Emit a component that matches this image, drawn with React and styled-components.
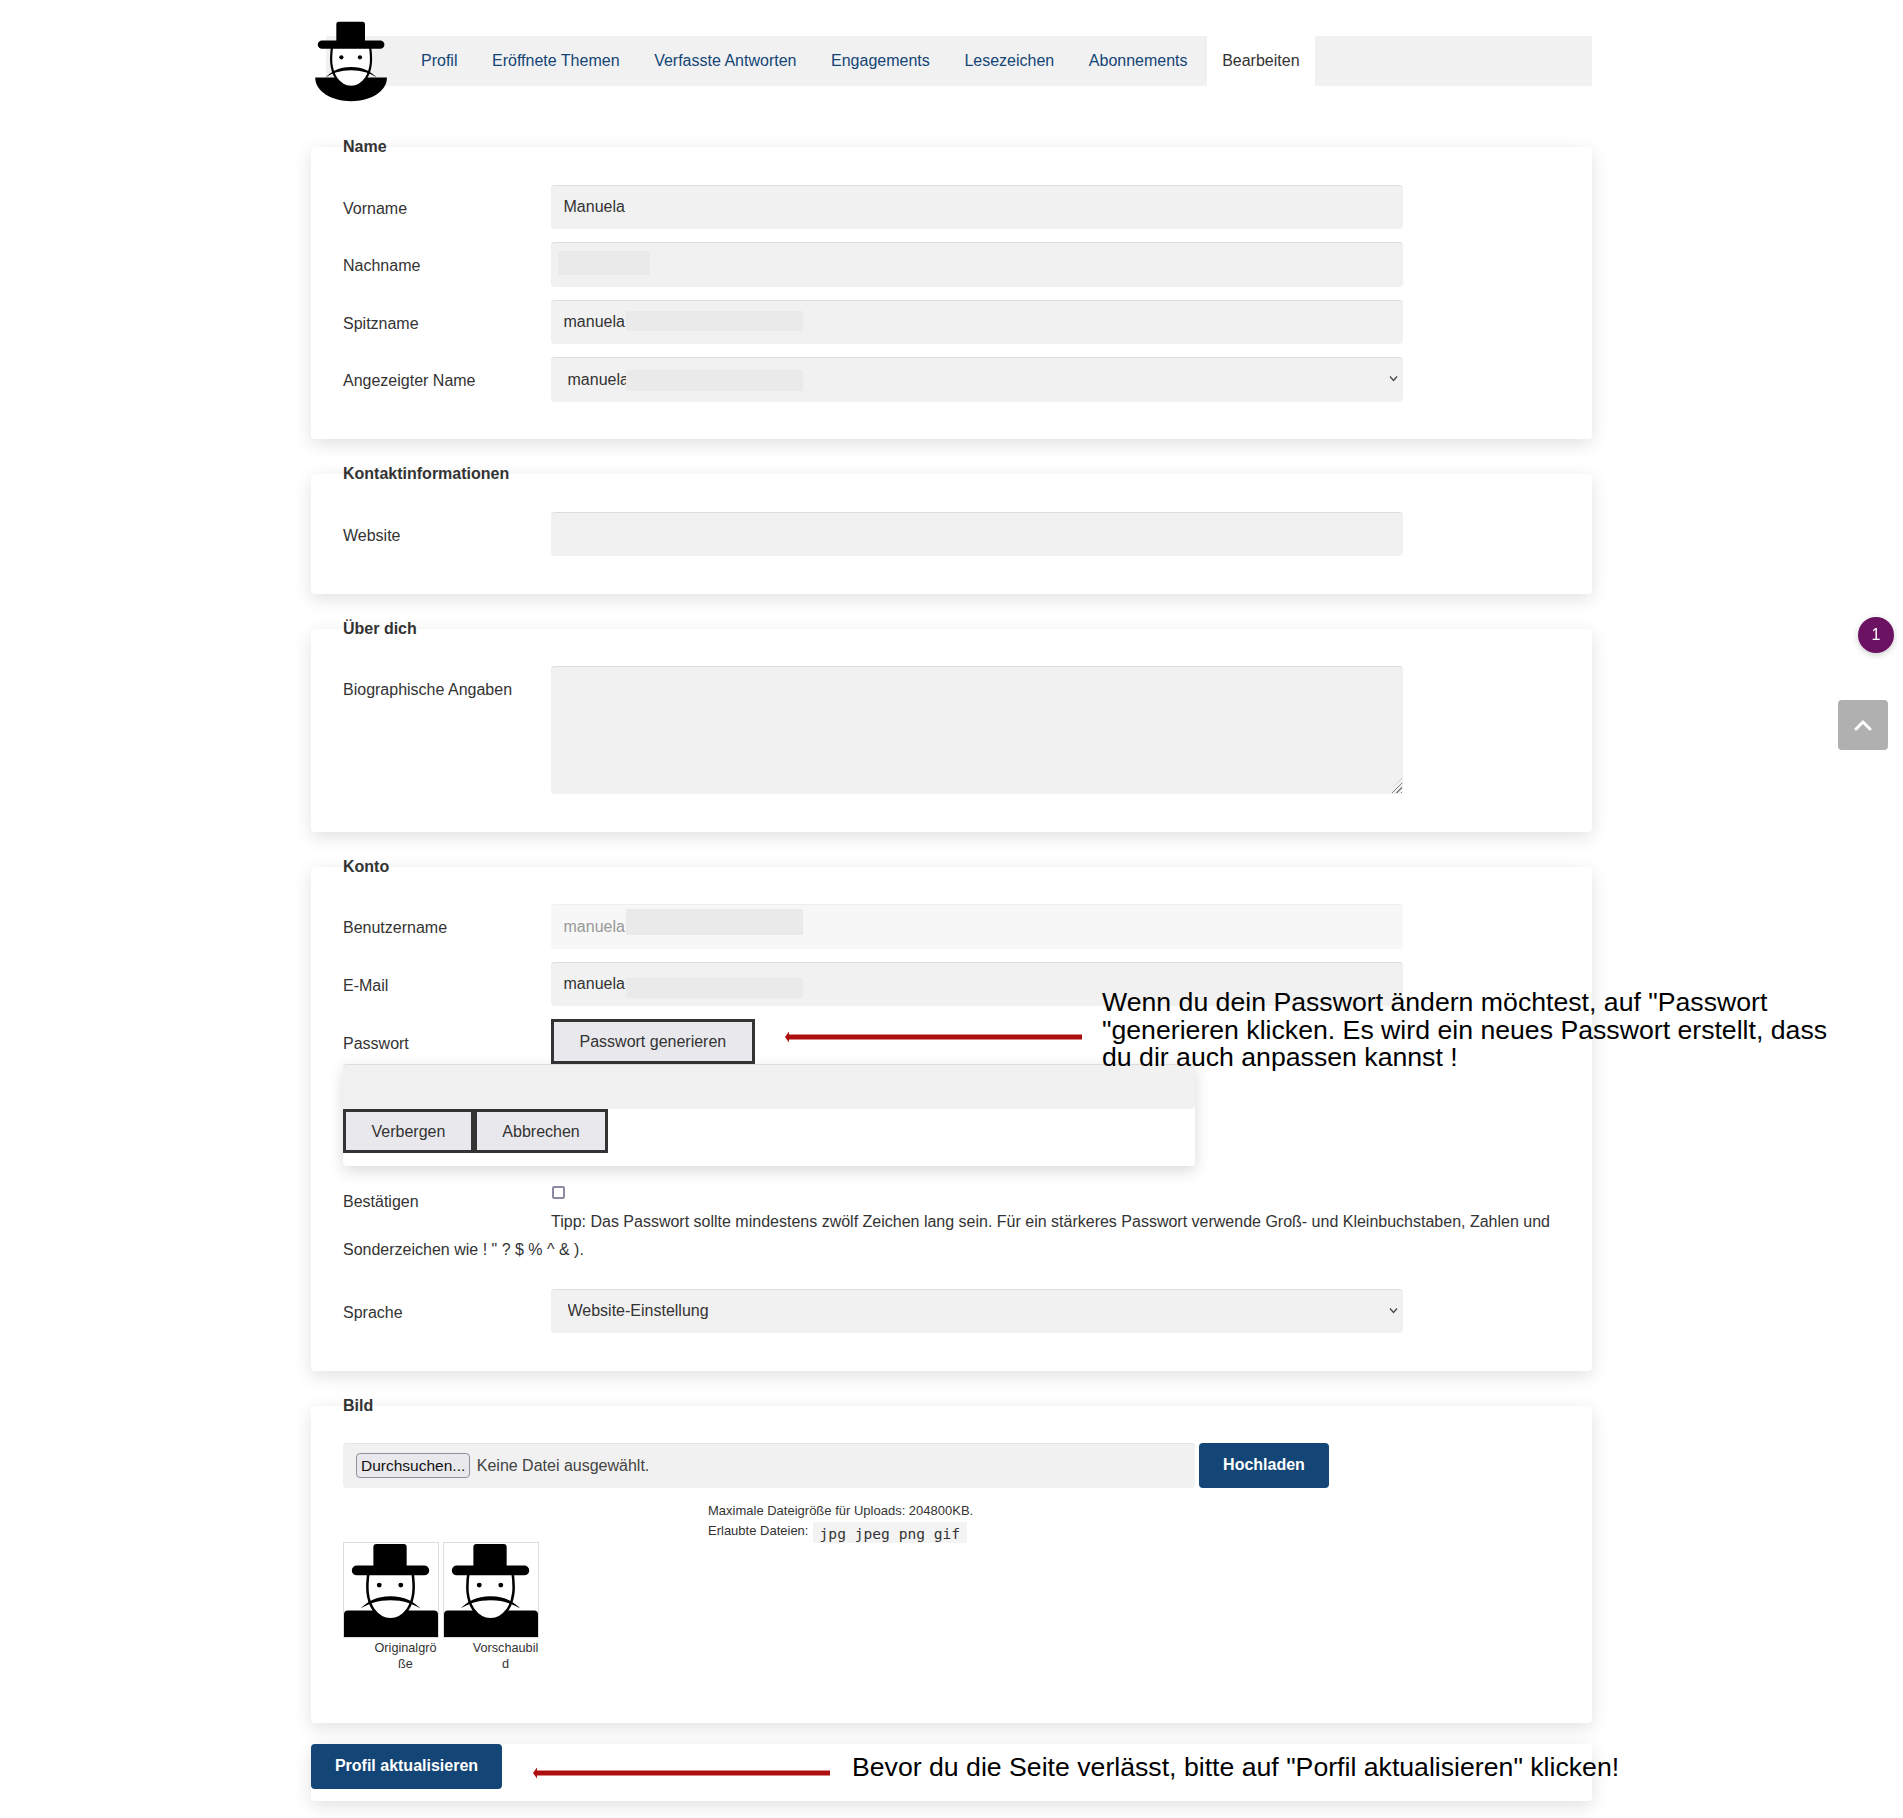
import styled, { createGlobalStyle } from 'styled-components'

const GlobalStyle = createGlobalStyle`
  body {
    margin: 0;
    background: #fff;
    color: #333;
    font-family: 'Liberation Sans', Arial, sans-serif;
    font-size: 16px;
  }
`

const Page = styled.div`
  position: relative;
  width: 1281px;
  height: 1818px;
  margin: 0 auto;
  padding-top: 36px;
  box-sizing: border-box;
`

const Header = styled.header`
  position: relative;
  height: 50px;
  margin-bottom: 61px;
  padding-left: 15px;
`

const LogoMark = styled.svg`
  position: absolute;
  left: 0;
  top: -15px;
  width: 81px;
  height: 81px;
`

const Nav = styled.nav`
  display: flex;
  gap: 4.6px;
  height: 50px;
  padding-left: 80px;
  background: #f1f1f1;
`

const Tab = styled.a`
  padding: 0 15px;
  line-height: 49px;
  color: ${(p) => (p.$active ? '#333' : '#134576')};
  background: ${(p) => (p.$active ? '#fff' : 'transparent')};
  text-decoration: none;
`

const Card = styled.section`
  margin-bottom: ${(p) => (p.$last ? '21px' : '35px')};
  padding: 0 32px 37.5px;
  background: #fff;
  border-radius: 4px;
  box-shadow: 0 5px 18px rgba(0, 0, 0, 0.12);
`

const CardTitle = styled.h3`
  position: relative;
  top: -10px;
  height: 20px;
  margin: 0 0 -11.5px;
  padding-bottom: 29px;
  font-size: 16px;
  line-height: 20px;
  font-weight: 700;
`

const Rows = styled.div`
  display: flex;
  flex-direction: column;
  gap: 13px;
`

const Row = styled.div`
  display: flex;
  align-items: ${(p) => (p.$top ? 'flex-start' : 'center')};
`

const Label = styled.label`
  width: 208px;
  flex: none;
  padding-top: ${(p) => (p.$top ? '14px' : '4px')};
  line-height: 20px;
`

const FieldWrap = styled.div`
  position: relative;
  width: 852px;
`

const Input = styled.input`
  display: block;
  width: 100%;
  height: 44.5px;
  box-sizing: border-box;
  padding: 0 12.5px;
  border: 0;
  border-top: 1px solid ${(p) => (p.disabled ? '#eee' : '#ddd')};
  border-radius: 4px;
  background: ${(p) => (p.disabled ? '#f7f7f7' : '#f1f1f1')};
  color: ${(p) => (p.disabled ? '#999' : '#333')};
  font: 16px 'Liberation Sans', Arial, sans-serif;
`

const Select = styled.select`
  display: block;
  width: 100%;
  height: 44.5px;
  box-sizing: border-box;
  padding: 0 16.5px 1px;
  border: 0;
  border-top: 1px solid #ddd;
  border-radius: 4px;
  appearance: none;
  background: #f1f1f1;
  color: #333;
  font: 16px 'Liberation Sans', Arial, sans-serif;
`

const SelectArrow = styled.svg`
  position: absolute;
  right: 5px;
  top: 18px;
  width: 9px;
  height: 7px;
  pointer-events: none;
`

const TextArea = styled.textarea`
  display: block;
  width: 100%;
  height: 128px;
  box-sizing: border-box;
  border: 0;
  border-top: 1px solid #ddd;
  border-radius: 4px;
  background: #f1f1f1;
  resize: none;
`

const ResizeGrip = styled.span`
  position: absolute;
  right: 1px;
  bottom: 1px;
  width: 14px;
  height: 15px;
  clip-path: polygon(100% 0, 100% 100%, 0 100%);
  background: repeating-linear-gradient(135deg, #808080 0 1px, transparent 1px 3.2px);
`

// grey boxes that hide the personal data in the screenshot
const Redacted = styled.span`
  position: absolute;
  left: ${(p) => p.$left}px;
  top: ${(p) => p.$top}px;
  width: ${(p) => p.$width}px;
  height: ${(p) => p.$height}px;
  background: #eaeaea;
`

const OutlineButton = styled.button`
  height: ${(p) => (p.$small ? '44px' : '45px')};
  box-sizing: border-box;
  padding: ${(p) => (p.$small ? '1px' : '0')} 25.5px 0;
  border: 3px solid #333;
  background: #e9e9ed;
  color: #333;
  font: 16px 'Liberation Sans', Arial, sans-serif;
`

const PasswordPanel = styled.div`
  width: 852px;
  height: 102px;
  border-radius: 4px;
  background: #fff;
  box-shadow: 0 5px 15px rgba(0, 0, 0, 0.15);
`

const PasswordInput = styled(Input)`
  height: 45px;
`

const ButtonRow = styled.div`
  display: flex;
`

const ConfirmBlock = styled.div`
  margin: 20px 0 25px;
  line-height: 28px;
`

const ConfirmLabel = styled.label`
  float: left;
  width: 208px;
  height: 28px;
  margin-top: 2px;
`

const CheckBox = styled.input`
  display: block;
  appearance: none;
  width: 13.5px;
  height: 13px;
  box-sizing: border-box;
  margin: 1px 0 8.5px 208.5px;
  border: 2px solid #8a8aa0;
  border-radius: 2px;
  background: #fff;
`

const HintText = styled.div`
  font-size: 16px;
`

const UploadRow = styled.div`
  display: flex;
  gap: 4px;
`

const FileBox = styled.div`
  display: flex;
  align-items: center;
  width: 852px;
  height: 45px;
  box-sizing: border-box;
  padding: 0 0 1px 13px;
  border-top: 1px solid #e4e4e4;
  border-radius: 4px;
  background: #f1f1f1;
`

const BrowseButton = styled.button`
  height: 25px;
  padding: 0 4px;
  border: 1px solid #8f8f9d;
  border-radius: 4px;
  background: #e9e9ed;
  color: #111;
  font: 15.5px 'Liberation Sans', Arial, sans-serif;
`

const FileName = styled.span`
  margin-left: 6.5px;
  color: #444;
`

const PrimaryButton = styled.button`
  width: ${(p) => p.$width}px;
  height: 45px;
  padding: 0 0 1px;
  border: 0;
  border-radius: 4px;
  background: #134576;
  color: #fff;
  font: 700 16px 'Liberation Sans', Arial, sans-serif;
`

const UploadInfo = styled.div`
  margin: 13px 0 0 365px;
  height: 41px;
  font-size: 13px;
  line-height: 19.5px;
`

const AllowedTypes = styled.code`
  display: inline-block;
  height: 21px;
  margin-left: 1px;
  padding: 0 6.5px;
  vertical-align: -4px;
  background: #f3f3f3;
  font: 14.6px/23px 'DejaVu Sans Mono', monospace;
`

const Thumbs = styled.div`
  display: flex;
  gap: 4px;
  padding-bottom: 13.5px;
`

const Thumb = styled.figure`
  width: 96px;
  margin: 0;
`

const ThumbFrame = styled.svg`
  display: block;
  width: 96px;
  height: 96px;
  box-sizing: border-box;
  border: 1px solid #ddd;
`

const ThumbCaption = styled.figcaption`
  width: 68px;
  margin: 2px 0 0 28.5px;
  font-size: 12.7px;
  line-height: 16px;
  text-align: center;
  word-break: break-all;
`

const SubmitCard = styled.section`
  height: 57px;
  border-radius: 4px;
  background: #fff;
  box-shadow: 0 5px 18px rgba(0, 0, 0, 0.12);
`

const Note = styled.p`
  position: absolute;
  left: ${(p) => p.$left}px;
  top: ${(p) => p.$top}px;
  width: ${(p) => p.$width}px;
  margin: 0;
  color: #000;
  font-size: 26.67px;
  line-height: 27.7px;
`

const NoteArrow = styled.svg`
  position: absolute;
  left: ${(p) => p.$left}px;
  top: ${(p) => p.$top}px;
  width: ${(p) => p.$width}px;
  height: 14px;
`

const Badge = styled.div`
  position: fixed;
  left: 1858px;
  top: 617px;
  width: 36px;
  height: 36px;
  border-radius: 50%;
  background: #6b1262;
  box-shadow: 0 2px 6px rgba(0, 0, 0, 0.2);
  color: #fff;
  font-size: 16px;
  line-height: 36px;
  text-align: center;
`

const BackToTop = styled.a`
  position: fixed;
  left: 1838px;
  top: 700px;
  display: flex;
  align-items: center;
  justify-content: center;
  width: 50px;
  height: 50px;
  border-radius: 4px;
  background: #b0b0b0;
`

function ManFace() {
  return (
    <>
      <path
        d="M25 30C23 45 23 57 30 68C35 75 41 78 47.5 78S60 75 65 68C72 57 72 45 70 30Z"
        fill="#fff"
        stroke="#000"
        strokeWidth="2.6"
      />
      <path d="M17 67C24 60 33 54.5 47.5 54.5S71 60 78 67C70 62 60 58.5 47.5 58.5S25 62 17 67Z" />
      <circle cx="36" cy="43" r="2.5" />
      <circle cx="58" cy="43" r="2.5" />
      <rect x="30" y="1" width="34" height="26" rx="3" />
      <rect x="8" y="23" width="79" height="10" rx="5" />
    </>
  )
}

function Logo() {
  return (
    <LogoMark viewBox="0 0 96 96">
      <path d="M5 67H90C90 84 70 95 47.5 95S5 84 5 67Z" />
      <ManFace />
    </LogoMark>
  )
}

function Portrait() {
  return (
    <ThumbFrame viewBox="0 0 96 96">
      <path d="M0 73a4 4 0 0 1 4-4H92a4 4 0 0 1 4 4V96H0Z" />
      <ManFace />
    </ThumbFrame>
  )
}

function Arrow({ left, top, width }) {
  return (
    <NoteArrow $left={left} $top={top} $width={width} viewBox={`0 0 ${width} 14`}>
      <path d={`M0 7L4 1.5V4.5H${width}V9.5H4V12.5Z`} fill="#ae0e0e" />
    </NoteArrow>
  )
}

function Chevron() {
  return (
    <SelectArrow viewBox="0 0 9 7" fill="none" stroke="#444" strokeWidth="1.2">
      <path d="M1 1.5L4.5 5.5L8 1.5" />
    </SelectArrow>
  )
}

function App() {
  return (
    <>
      <GlobalStyle />
      <Page>
        <Header>
          <Nav>
            <Tab href="#">Profil</Tab>
            <Tab href="#">Eröffnete Themen</Tab>
            <Tab href="#">Verfasste Antworten</Tab>
            <Tab href="#">Engagements</Tab>
            <Tab href="#">Lesezeichen</Tab>
            <Tab href="#">Abonnements</Tab>
            <Tab href="#" $active>Bearbeiten</Tab>
          </Nav>
          <Logo />
        </Header>

        <Card>
          <CardTitle>Name</CardTitle>
          <Rows>
            <Row>
              <Label>Vorname</Label>
              <FieldWrap><Input defaultValue="Manuela" /></FieldWrap>
            </Row>
            <Row>
              <Label>Nachname</Label>
              <FieldWrap>
                <Input />
                <Redacted $left={7} $top={9} $width={92} $height={24} />
              </FieldWrap>
            </Row>
            <Row>
              <Label>Spitzname</Label>
              <FieldWrap>
                <Input defaultValue="manuela" />
                <Redacted $left={75} $top={11} $width={177} $height={20} />
              </FieldWrap>
            </Row>
            <Row>
              <Label>Angezeigter Name</Label>
              <FieldWrap>
                <Select defaultValue="manuela"><option>manuela</option></Select>
                <Chevron />
                <Redacted $left={75} $top={13} $width={177} $height={21} />
              </FieldWrap>
            </Row>
          </Rows>
        </Card>

        <Card>
          <CardTitle>Kontaktinformationen</CardTitle>
          <Row>
            <Label>Website</Label>
            <FieldWrap><Input /></FieldWrap>
          </Row>
        </Card>

        <Card>
          <CardTitle>Über dich</CardTitle>
          <Row $top>
            <Label $top>Biographische Angaben</Label>
            <FieldWrap>
              <TextArea />
              <ResizeGrip />
            </FieldWrap>
          </Row>
        </Card>

        <Card>
          <CardTitle>Konto</CardTitle>
          <Rows>
            <Row>
              <Label>Benutzername</Label>
              <FieldWrap>
                <Input disabled defaultValue="manuela" />
                <Redacted $left={75} $top={5} $width={177} $height={26} />
              </FieldWrap>
            </Row>
            <Row>
              <Label>E-Mail</Label>
              <FieldWrap>
                <Input defaultValue="manuela" />
                <Redacted $left={75} $top={16} $width={177} $height={20} />
              </FieldWrap>
            </Row>
            <Row>
              <Label>Passwort</Label>
              <OutlineButton>Passwort generieren</OutlineButton>
            </Row>
          </Rows>
          <PasswordPanel>
            <PasswordInput />
            <ButtonRow>
              <OutlineButton $small>Verbergen</OutlineButton>
              <OutlineButton $small>Abbrechen</OutlineButton>
            </ButtonRow>
          </PasswordPanel>
          <ConfirmBlock>
            <ConfirmLabel>Bestätigen</ConfirmLabel>
            <CheckBox type="checkbox" />
            <HintText>
              Tipp: Das Passwort sollte mindestens zwölf Zeichen lang sein. Für ein stärkeres Passwort verwende Groß- und Kleinbuchstaben, Zahlen und Sonderzeichen wie ! " ? $ % ^ &amp; ).
            </HintText>
          </ConfirmBlock>
          <Row>
            <Label>Sprache</Label>
            <FieldWrap>
              <Select defaultValue="Website-Einstellung"><option>Website-Einstellung</option></Select>
              <Chevron />
            </FieldWrap>
          </Row>
        </Card>

        <Card $last>
          <CardTitle>Bild</CardTitle>
          <UploadRow>
            <FileBox>
              <BrowseButton>Durchsuchen...</BrowseButton>
              <FileName>Keine Datei ausgewählt.</FileName>
            </FileBox>
            <PrimaryButton $width={130}>Hochladen</PrimaryButton>
          </UploadRow>
          <UploadInfo>
            <div>Maximale Dateigröße für Uploads: 204800KB.</div>
            <div>Erlaubte Dateien: <AllowedTypes>jpg jpeg png gif</AllowedTypes></div>
          </UploadInfo>
          <Thumbs>
            <Thumb>
              <Portrait />
              <ThumbCaption>Originalgröße</ThumbCaption>
            </Thumb>
            <Thumb>
              <Portrait />
              <ThumbCaption>Vorschaubild</ThumbCaption>
            </Thumb>
          </Thumbs>
        </Card>

        <SubmitCard>
          <PrimaryButton $width={191}>Profil aktualisieren</PrimaryButton>
        </SubmitCard>

        <Arrow left={474} top={1030} width={297} />
        <Note $left={791} $top={989} $width={740}>
          Wenn du dein Passwort ändern möchtest, auf "Passwort "generieren klicken. Es wird ein neues Passwort erstellt, dass du dir auch anpassen kannst !
        </Note>
        <Arrow left={222} top={1766} width={297} />
        <Note $left={541} $top={1754} $width={800}>
          Bevor du die Seite verlässt, bitte auf "Porfil aktualisieren" klicken!
        </Note>
      </Page>
      <Badge>1</Badge>
      <BackToTop href="#">
        <svg width="18" height="18" viewBox="0 0 18 18" fill="none" stroke="#fff" strokeWidth="3" strokeLinecap="round">
          <path d="M2 13L9 6L16 13" />
        </svg>
      </BackToTop>
    </>
  )
}

export default App
